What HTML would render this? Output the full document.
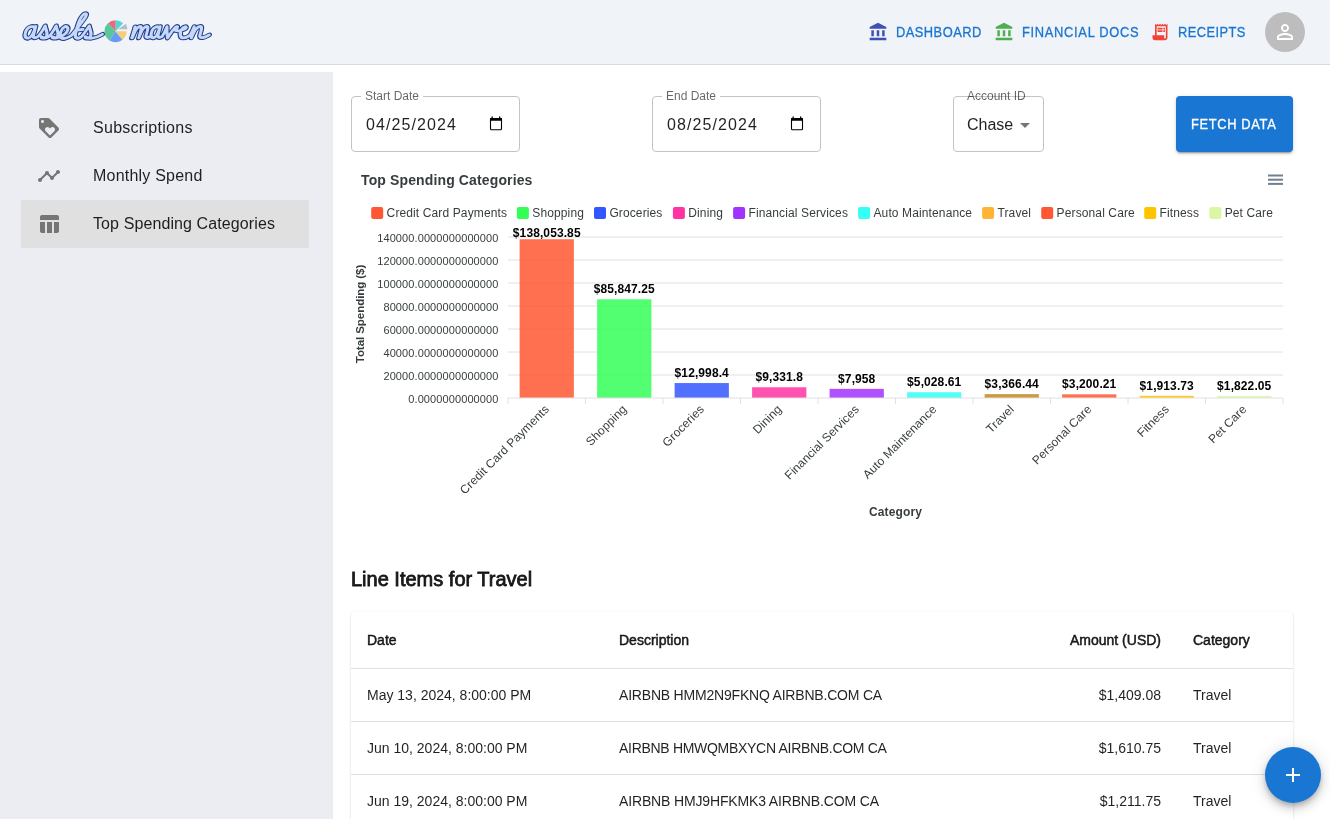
<!DOCTYPE html>
<html><head><meta charset="utf-8">
<style>
*{box-sizing:border-box;margin:0;padding:0}
html,body{width:1330px;height:819px;overflow:hidden;background:#fff;will-change:transform;font-family:"Liberation Sans",sans-serif;color:rgba(0,0,0,0.87)}
.abs{position:absolute}
#hdr{position:absolute;left:0;top:0;width:1330px;height:65px;background:#f0f3f7;border-bottom:1px solid #d9dbe1}
.nav{position:absolute;top:24px;height:16px;line-height:16px;color:#1976d2;font-size:14px;-webkit-text-stroke:0.3px #1976d2;white-space:nowrap;transform-origin:0 0;transform:scaleX(0.92)}
#side{position:absolute;left:0;top:72px;width:333px;height:760px;background:#ecedf2}
.item{position:absolute;left:21px;width:288px;height:48px}
.item.sel{background:#e0e0e0}
.item svg{position:absolute;left:16px;top:12px;width:24px;height:24px;fill:#757575}
.item span{position:absolute;left:72px;top:14px;font-size:16px;line-height:20px;color:rgba(0,0,0,0.87);letter-spacing:0.1px}
.field{position:absolute;top:96px;height:56px;border:1px solid #c4c4c4;border-radius:4px;background:#fff}
.flabel{position:absolute;top:89px;font-size:12px;line-height:14px;color:rgba(0,0,0,0.6);background:#fff;padding:0 4px}
.fval{position:absolute;font-size:16px;line-height:18px;color:rgba(0,0,0,0.87)}
.th{position:absolute;top:16px;font-size:14px;line-height:24px;color:rgba(0,0,0,0.87);-webkit-text-stroke:0.5px rgba(0,0,0,0.87)}
.td{position:absolute;font-size:14px;line-height:20px;color:rgba(0,0,0,0.87)}
.hl{position:absolute;left:0;width:942px;height:1px;background:#e0e0e0}
</style></head><body>
<div id="hdr">
  <!-- logo -->
  <svg class="abs" width="230" height="60" viewBox="0 0 230 60" style="left:0;top:0;overflow:visible"><g transform="translate(0 32.3) scale(1 0.93) translate(0 -32.3)"><g transform="translate(7.57 0) skewX(-11)" fill="none" stroke="#1b3f86" stroke-width="5.3" stroke-linecap="round" stroke-linejoin="round"><path d="M32.8 28.5 C32 26 29.5 25.8 27.8 26.5 C25 27.8 24 31.5 24.2 34.5 C24.4 37.5 26.5 39 28.5 38.5 C31 37.8 32.5 33 33.2 26 L32.8 35.5 C32.8 38.5 35 39 37.5 37 C39.5 34.5 41.5 29 42.5 25.5 C43.5 29 46.5 32 46.2 35.5 C46 38.8 41.5 39.5 40.8 37 C43 38.8 46 38.8 48.5 37 C50.5 34.5 52.5 29 53.5 25.5 C54.5 29 57.5 32 57.2 35.5 C57 38.8 52.5 39.5 51.8 37 C54 38.8 57 38.8 59.5 37 C62 36.5 66 33 66 29.5 C66 26.5 63.5 25.5 62 26.5 C59.5 28 59 33 59.5 35.5 C60 38.5 62.5 39.3 65 38.8 C67.5 38.3 69.5 37 71 35.5 C73.5 31 79 21 81 16 C82.5 12 79.5 11 77.5 14.5 C75.5 18 74.5 28 74.5 34 C74.5 38.5 77.5 39.5 80 38 C82.5 36 84.5 30 86.5 25.5 C87.5 29 90.5 32 90.2 35.5 C90 38.8 85.5 39.5 84.8 37 C88 39.5 95 39.5 101.5 34.5"/><path d="M74.8 29.8 L81 29.3"/><path transform="translate(1.2 0)" d="M130.5 38.3 C131 34 131.3 30 131.5 26.5 L131 38.3 C132 31 133.8 26 136.3 26 C138.5 26 138.2 30 137.5 38.3 C138.5 31 140.3 26 142.8 26 C145 26 144.8 30 144.3 35 C144 37.8 146 38.6 148.5 37.2 M156 28.5 C155.3 26.3 153.3 26 151.8 26.8 C149.5 28 148.8 31.5 149 34.3 C149.2 37.2 151 38.6 152.8 38 C154.8 37.3 156 33 156.5 26.3 L156.1 35 C156 37.8 157.8 38.6 160.3 37.2 C161.8 34 162.8 29.5 163.3 26.3 C163.8 30 164.8 34.5 166.3 38.3 C168 34 170 29.5 172 26.8 C172.8 25.8 174.2 26 173.8 27.8 C173.4 29.2 172.2 29.6 171.6 29.2 C172.6 30.6 174.4 31 176.5 30.6 C179 30 182.5 29.5 182.8 27.8 C183 25.8 179.5 25.6 178.3 29.5 C177.3 33.5 178.5 38.3 182 38.3 C184.5 38.3 186.5 37 188 35.6 C189.3 33 190 29 190.5 26.3 L190 38.3 C191.3 31 193.3 26 196.3 26 C198.8 26 198.5 30 198 35 C197.6 38.5 201 39.5 207.3 35.2"/></g></g><g transform="translate(0 32.3) scale(1 0.93) translate(0 -32.3)"><g transform="translate(7.57 0) skewX(-11)" fill="none" stroke="#c7d6fb" stroke-width="3.1" stroke-linecap="round" stroke-linejoin="round"><path d="M32.8 28.5 C32 26 29.5 25.8 27.8 26.5 C25 27.8 24 31.5 24.2 34.5 C24.4 37.5 26.5 39 28.5 38.5 C31 37.8 32.5 33 33.2 26 L32.8 35.5 C32.8 38.5 35 39 37.5 37 C39.5 34.5 41.5 29 42.5 25.5 C43.5 29 46.5 32 46.2 35.5 C46 38.8 41.5 39.5 40.8 37 C43 38.8 46 38.8 48.5 37 C50.5 34.5 52.5 29 53.5 25.5 C54.5 29 57.5 32 57.2 35.5 C57 38.8 52.5 39.5 51.8 37 C54 38.8 57 38.8 59.5 37 C62 36.5 66 33 66 29.5 C66 26.5 63.5 25.5 62 26.5 C59.5 28 59 33 59.5 35.5 C60 38.5 62.5 39.3 65 38.8 C67.5 38.3 69.5 37 71 35.5 C73.5 31 79 21 81 16 C82.5 12 79.5 11 77.5 14.5 C75.5 18 74.5 28 74.5 34 C74.5 38.5 77.5 39.5 80 38 C82.5 36 84.5 30 86.5 25.5 C87.5 29 90.5 32 90.2 35.5 C90 38.8 85.5 39.5 84.8 37 C88 39.5 95 39.5 101.5 34.5"/><path d="M74.8 29.8 L81 29.3"/><path transform="translate(1.2 0)" d="M130.5 38.3 C131 34 131.3 30 131.5 26.5 L131 38.3 C132 31 133.8 26 136.3 26 C138.5 26 138.2 30 137.5 38.3 C138.5 31 140.3 26 142.8 26 C145 26 144.8 30 144.3 35 C144 37.8 146 38.6 148.5 37.2 M156 28.5 C155.3 26.3 153.3 26 151.8 26.8 C149.5 28 148.8 31.5 149 34.3 C149.2 37.2 151 38.6 152.8 38 C154.8 37.3 156 33 156.5 26.3 L156.1 35 C156 37.8 157.8 38.6 160.3 37.2 C161.8 34 162.8 29.5 163.3 26.3 C163.8 30 164.8 34.5 166.3 38.3 C168 34 170 29.5 172 26.8 C172.8 25.8 174.2 26 173.8 27.8 C173.4 29.2 172.2 29.6 171.6 29.2 C172.6 30.6 174.4 31 176.5 30.6 C179 30 182.5 29.5 182.8 27.8 C183 25.8 179.5 25.6 178.3 29.5 C177.3 33.5 178.5 38.3 182 38.3 C184.5 38.3 186.5 37 188 35.6 C189.3 33 190 29 190.5 26.3 L190 38.3 C191.3 31 193.3 26 196.3 26 C198.8 26 198.5 30 198 35 C197.6 38.5 201 39.5 207.3 35.2"/></g></g><g transform="translate(115.5 31.2)">
        <path d="M0 0 L0 -11 A11 11 0 0 1 7.6 -8 Z" fill="#4fd6d6"/>
        <path d="M0 0 L-7.5 -8 A11 11 0 0 1 0 -11 Z" fill="#e86a7f"/>
        <path d="M0 0 L-6 9.2 A11 11 0 0 1 -7.5 -8 Z" fill="#5ac79a"/>
        <path d="M0 0 L7 8.5 A11 11 0 0 1 -6 9.2 Z" fill="#6a9af8"/>
        <path d="M0 0 L11 0 A11 11 0 0 1 7 8.5 Z" fill="#f1cf7a"/>
        <path d="M2.5 -2 L12 -2 L10.5 -7.5 Z" fill="#b9bccb"/>
      </g></svg>
  <svg class="abs" width="20" height="20" viewBox="0 0 24 24" style="left:868px;top:22px;fill:#3f51b5"><path d="M4 10h3v7H4zm6.5 0h3v7h-3zM2 19h20v3H2zm15-9h3v7h-3zm-5-9L2 6v2h20V6z"/></svg>
  <div class="nav" style="left:896px;letter-spacing:0.5px">DASHBOARD</div>
  <svg class="abs" width="20" height="20" viewBox="0 0 24 24" style="left:994px;top:22px;fill:#4caf50"><path d="M4 10h3v7H4zm6.5 0h3v7h-3zM2 19h20v3H2zm15-9h3v7h-3zm-5-9L2 6v2h20V6z"/></svg>
  <div class="nav" style="left:1022px;letter-spacing:0.75px">FINANCIAL DOCS</div>
  <svg class="abs" width="20" height="20" viewBox="0 0 24 24" style="left:1150px;top:22px;fill:#f44336"><path fill-rule="evenodd" d="M19.5 3.5 18 2l-1.5 1.5L15 2l-1.5 1.5L12 2l-1.5 1.5L9 2 7.5 3.5 6 2v14H3v3c0 1.66 1.34 3 3 3h12c1.66 0 3-1.34 3-3V2zM19 19c0 .55-.45 1-1 1s-1-.45-1-1v-3H8V5h11z"/><path d="M9 7h6v2H9zm7 0h2v2h-2zm-7 3h6v2H9zm7 0h2v2h-2z"/></svg>
  <div class="nav" style="left:1178px;letter-spacing:0.45px">RECEIPTS</div>
  <div class="abs" style="left:1265px;top:12px;width:40px;height:40px;border-radius:50%;background:#bdbdbd">
    <svg width="24" height="24" viewBox="0 0 24 24" style="position:absolute;left:8px;top:8px;fill:#fff"><path d="M12 5.9c1.16 0 2.1.94 2.1 2.1s-.94 2.1-2.1 2.1S9.9 9.16 9.9 8s.94-2.1 2.1-2.1m0 9c2.97 0 6.1 1.46 6.1 2.1v1.1H5.9V17c0-.64 3.13-2.1 6.1-2.1M12 4C9.79 4 8 5.79 8 8s1.79 4 4 4 4-1.79 4-4-1.79-4-4-4m0 9c-2.67 0-8 1.34-8 4v3h16v-3c0-2.66-5.33-4-8-4"/></svg>
  </div>
</div>

<div id="side">
  <div class="item" style="top:32px">
    <svg viewBox="0 0 24 24"><path d="M21.41 11.58l-9-9C12.05 2.22 11.55 2 11 2H4c-1.1 0-2 .9-2 2v7c0 .55.22 1.05.59 1.42l9 9c.36.36.86.58 1.41.58s1.05-.22 1.41-.59l7-7c.37-.36.59-.86.59-1.41s-.23-1.06-.59-1.42M5.5 7C4.67 7 4 6.33 4 5.5S4.67 4 5.5 4 7 4.67 7 5.5 6.33 7 5.5 7m11.77 8.27L13 19.54l-4.27-4.27C8.28 14.81 8 14.19 8 13.5c0-1.38 1.12-2.5 2.5-2.5.69 0 1.32.28 1.77.74l.73.72.73-.73c.45-.45 1.08-.73 1.77-.73 1.38 0 2.5 1.12 2.5 2.5 0 .69-.28 1.32-.73 1.77"/></svg>
    <span style="letter-spacing:0.28px">Subscriptions</span>
  </div>
  <div class="item" style="top:80px">
    <svg viewBox="0 0 24 24"><path d="M23 8c0 1.1-.9 2-2 2-.18 0-.35-.02-.51-.07l-3.56 3.55c.05.16.07.34.07.52 0 1.1-.9 2-2 2s-2-.9-2-2c0-.18.02-.36.07-.52l-2.55-2.55c-.16.05-.34.07-.52.07s-.36-.02-.52-.07l-4.55 4.56c.05.16.07.33.07.51 0 1.1-.9 2-2 2s-2-.9-2-2 .9-2 2-2c.18 0 .35.02.51.07l4.56-4.55C8.02 9.36 8 9.18 8 9c0-1.1.9-2 2-2s2 .9 2 2c0 .18-.02.36-.07.52l2.55 2.55c.16-.05.34-.07.52-.07s.36.02.52.07l3.55-3.56C19.02 8.35 19 8.18 19 8c0-1.1.9-2 2-2s2 .9 2 2"/></svg>
    <span style="letter-spacing:0.22px">Monthly Spend</span>
  </div>
  <div class="item sel" style="top:128px">
    <svg viewBox="0 0 24 24"><path d="M10 10.02h5V21h-5zM17 21h3c1.1 0 2-.9 2-2v-9h-5v11zm3-18H5c-1.1 0-2 .9-2 2v3h19V5c0-1.1-.9-2-2-2zM3 19c0 1.1.9 2 2 2h3V10H3v9z"/></svg>
    <span style="letter-spacing:0.1px">Top Spending Categories</span>
  </div>
</div>

<!-- form -->
<div class="field" style="left:351px;width:169px"></div>
<div class="flabel" style="left:361px">Start Date</div>
<div class="fval" style="left:366px;top:116px;letter-spacing:1.1px">04/25/2024</div><svg class="abs" width="16" height="18" viewBox="0 0 16 18" style="left:488px;top:114px"><rect x="2.5" y="4.5" width="11" height="11.3" rx="1" fill="none" stroke="#000" stroke-width="1.1"/><rect x="2" y="4" width="12" height="2.8" rx="0.5" fill="#000"/><rect x="3.5" y="2.5" width="1.3" height="2" fill="#000"/><rect x="11" y="2.5" width="1.3" height="2" fill="#000"/></svg>
<div class="field" style="left:652px;width:169px"></div>
<div class="flabel" style="left:662px">End Date</div>
<div class="fval" style="left:667px;top:116px;letter-spacing:1.1px">08/25/2024</div><svg class="abs" width="16" height="18" viewBox="0 0 16 18" style="left:789px;top:114px"><rect x="2.5" y="4.5" width="11" height="11.3" rx="1" fill="none" stroke="#000" stroke-width="1.1"/><rect x="2" y="4" width="12" height="2.8" rx="0.5" fill="#000"/><rect x="3.5" y="2.5" width="1.3" height="2" fill="#000"/><rect x="11" y="2.5" width="1.3" height="2" fill="#000"/></svg>

<div class="field" style="left:953px;width:91px"></div>
<div class="flabel" style="left:967px;background:transparent;padding:0">Account ID</div>
<div class="fval" style="left:967px;top:116px">Chase</div><svg class="abs" width="24" height="24" viewBox="0 0 24 24" style="left:1013px;top:113px;fill:rgba(0,0,0,0.54)"><path d="M7 10l5 5 5-5z"/></svg>

<div class="abs" style="left:1176px;top:96px;width:117px;height:56px;background:#1976d2;border-radius:4px;box-shadow:0 3px 1px -2px rgba(0,0,0,.2),0 2px 2px 0 rgba(0,0,0,.14),0 1px 5px 0 rgba(0,0,0,.12);"><div style="position:absolute;left:15px;top:20px;line-height:16px;color:#fff;font-size:14px;-webkit-text-stroke:0.3px #fff;letter-spacing:0.7px;white-space:nowrap;transform-origin:0 0;transform:scaleX(0.92)">FETCH DATA</div></div>

<!-- CHART -->
<div id="chart" class="abs" style="left:0;top:0;width:1330px;height:819px"><svg width="1330" height="819" style="position:absolute;left:0;top:0" font-family="Liberation Sans">
<text x="361" y="185" font-size="14" font-weight="bold" fill="#373d3f" letter-spacing="0.13">Top Spending Categories</text>
<rect x="1268" y="174.5" width="15" height="2" fill="#6e8192"/>
<rect x="1268" y="178.7" width="15" height="2" fill="#6e8192"/>
<rect x="1268" y="182.9" width="15" height="2" fill="#6e8192"/>
<rect x="371.2" y="207" width="12" height="12" rx="2" fill="#FF5733"/>
<text x="386.6" y="217.3" font-size="12" fill="#373d3f" letter-spacing="0.12">Credit Card Payments</text>
<rect x="516.9" y="207" width="12" height="12" rx="2" fill="#33FF57"/>
<text x="532.3" y="217.3" font-size="12" fill="#373d3f" letter-spacing="0.12">Shopping</text>
<rect x="594.0" y="207" width="12" height="12" rx="2" fill="#3357FF"/>
<text x="609.4" y="217.3" font-size="12" fill="#373d3f" letter-spacing="0.12">Groceries</text>
<rect x="672.9" y="207" width="12" height="12" rx="2" fill="#FF33A1"/>
<text x="688.3" y="217.3" font-size="12" fill="#373d3f" letter-spacing="0.12">Dining</text>
<rect x="733.1" y="207" width="12" height="12" rx="2" fill="#A133FF"/>
<text x="748.5" y="217.3" font-size="12" fill="#373d3f" letter-spacing="0.12">Financial Services</text>
<rect x="858.1" y="207" width="12" height="12" rx="2" fill="#33FFF5"/>
<text x="873.5" y="217.3" font-size="12" fill="#373d3f" letter-spacing="0.12">Auto Maintenance</text>
<rect x="982.1" y="207" width="12" height="12" rx="2" fill="#FFB533"/>
<text x="997.5" y="217.3" font-size="12" fill="#373d3f" letter-spacing="0.12">Travel</text>
<rect x="1041.2" y="207" width="12" height="12" rx="2" fill="#FF5733"/>
<text x="1056.6" y="217.3" font-size="12" fill="#373d3f" letter-spacing="0.12">Personal Care</text>
<rect x="1144.2" y="207" width="12" height="12" rx="2" fill="#FFC300"/>
<text x="1159.6" y="217.3" font-size="12" fill="#373d3f" letter-spacing="0.12">Fitness</text>
<rect x="1209.3" y="207" width="12" height="12" rx="2" fill="#DAF7A6"/>
<text x="1224.7" y="217.3" font-size="12" fill="#373d3f" letter-spacing="0.12">Pet Care</text>
<text x="498.5" y="402.50" font-size="11" text-anchor="end" fill="#373d3f" letter-spacing="0.1">0.0000000000000</text>
<line x1="508" y1="375.00" x2="1283" y2="375.00" stroke="#e0e0e0" stroke-width="1"/>
<text x="498.5" y="379.50" font-size="11" text-anchor="end" fill="#373d3f" letter-spacing="0.1">20000.0000000000000</text>
<line x1="508" y1="352.00" x2="1283" y2="352.00" stroke="#e0e0e0" stroke-width="1"/>
<text x="498.5" y="356.50" font-size="11" text-anchor="end" fill="#373d3f" letter-spacing="0.1">40000.0000000000000</text>
<line x1="508" y1="329.00" x2="1283" y2="329.00" stroke="#e0e0e0" stroke-width="1"/>
<text x="498.5" y="333.50" font-size="11" text-anchor="end" fill="#373d3f" letter-spacing="0.1">60000.0000000000000</text>
<line x1="508" y1="306.00" x2="1283" y2="306.00" stroke="#e0e0e0" stroke-width="1"/>
<text x="498.5" y="310.50" font-size="11" text-anchor="end" fill="#373d3f" letter-spacing="0.1">80000.0000000000000</text>
<line x1="508" y1="283.00" x2="1283" y2="283.00" stroke="#e0e0e0" stroke-width="1"/>
<text x="498.5" y="287.50" font-size="11" text-anchor="end" fill="#373d3f" letter-spacing="0.1">100000.0000000000000</text>
<line x1="508" y1="260.00" x2="1283" y2="260.00" stroke="#e0e0e0" stroke-width="1"/>
<text x="498.5" y="264.50" font-size="11" text-anchor="end" fill="#373d3f" letter-spacing="0.1">120000.0000000000000</text>
<line x1="508" y1="237.00" x2="1283" y2="237.00" stroke="#e0e0e0" stroke-width="1"/>
<text x="498.5" y="241.50" font-size="11" text-anchor="end" fill="#373d3f" letter-spacing="0.1">140000.0000000000000</text>
<rect x="519.62" y="239.24" width="54.25" height="158.76" fill="#FF5733" fill-opacity="0.85"/>
<text x="546.75" y="237.00" font-size="12" font-weight="bold" text-anchor="middle" fill="#000" letter-spacing="0.1">$138,053.85</text>
<rect x="597.12" y="299.28" width="54.25" height="98.72" fill="#33FF57" fill-opacity="0.85"/>
<text x="624.25" y="293.28" font-size="12" font-weight="bold" text-anchor="middle" fill="#000" letter-spacing="0.1">$85,847.25</text>
<rect x="674.62" y="383.05" width="54.25" height="14.95" fill="#3357FF" fill-opacity="0.85"/>
<text x="701.75" y="377.05" font-size="12" font-weight="bold" text-anchor="middle" fill="#000" letter-spacing="0.1">$12,998.4</text>
<rect x="752.12" y="387.27" width="54.25" height="10.73" fill="#FF33A1" fill-opacity="0.85"/>
<text x="779.25" y="381.27" font-size="12" font-weight="bold" text-anchor="middle" fill="#000" letter-spacing="0.1">$9,331.8</text>
<rect x="829.62" y="388.85" width="54.25" height="9.15" fill="#A133FF" fill-opacity="0.85"/>
<text x="856.75" y="382.85" font-size="12" font-weight="bold" text-anchor="middle" fill="#000" letter-spacing="0.1">$7,958</text>
<rect x="907.12" y="392.22" width="54.25" height="5.78" fill="#33FFF5" fill-opacity="0.85"/>
<text x="934.25" y="386.22" font-size="12" font-weight="bold" text-anchor="middle" fill="#000" letter-spacing="0.1">$5,028.61</text>
<rect x="984.62" y="394.13" width="54.25" height="3.87" fill="#cc9a42" fill-opacity="1"/>
<text x="1011.75" y="388.13" font-size="12" font-weight="bold" text-anchor="middle" fill="#000" letter-spacing="0.1">$3,366.44</text>
<rect x="1062.12" y="394.32" width="54.25" height="3.68" fill="#FF5733" fill-opacity="0.85"/>
<text x="1089.25" y="388.32" font-size="12" font-weight="bold" text-anchor="middle" fill="#000" letter-spacing="0.1">$3,200.21</text>
<rect x="1139.62" y="395.80" width="54.25" height="2.20" fill="#FFC300" fill-opacity="0.85"/>
<text x="1166.75" y="389.80" font-size="12" font-weight="bold" text-anchor="middle" fill="#000" letter-spacing="0.1">$1,913.73</text>
<rect x="1217.12" y="395.90" width="54.25" height="2.10" fill="#DAF7A6" fill-opacity="0.85"/>
<text x="1244.25" y="389.90" font-size="12" font-weight="bold" text-anchor="middle" fill="#000" letter-spacing="0.1">$1,822.05</text>
<line x1="508" y1="398" x2="1283" y2="398" stroke="#e0e0e0" stroke-width="1"/>
<line x1="508.00" y1="398" x2="508.00" y2="404" stroke="#e0e0e0" stroke-width="1"/>
<line x1="585.50" y1="398" x2="585.50" y2="404" stroke="#e0e0e0" stroke-width="1"/>
<line x1="663.00" y1="398" x2="663.00" y2="404" stroke="#e0e0e0" stroke-width="1"/>
<line x1="740.50" y1="398" x2="740.50" y2="404" stroke="#e0e0e0" stroke-width="1"/>
<line x1="818.00" y1="398" x2="818.00" y2="404" stroke="#e0e0e0" stroke-width="1"/>
<line x1="895.50" y1="398" x2="895.50" y2="404" stroke="#e0e0e0" stroke-width="1"/>
<line x1="973.00" y1="398" x2="973.00" y2="404" stroke="#e0e0e0" stroke-width="1"/>
<line x1="1050.50" y1="398" x2="1050.50" y2="404" stroke="#e0e0e0" stroke-width="1"/>
<line x1="1128.00" y1="398" x2="1128.00" y2="404" stroke="#e0e0e0" stroke-width="1"/>
<line x1="1205.50" y1="398" x2="1205.50" y2="404" stroke="#e0e0e0" stroke-width="1"/>
<line x1="1283.00" y1="398" x2="1283.00" y2="404" stroke="#e0e0e0" stroke-width="1"/>
<text x="549.75" y="410" font-size="12" text-anchor="end" fill="#373d3f" letter-spacing="0.1" transform="rotate(-45 549.75 410)">Credit Card Payments</text>
<text x="627.25" y="410" font-size="12" text-anchor="end" fill="#373d3f" letter-spacing="0.1" transform="rotate(-45 627.25 410)">Shopping</text>
<text x="704.75" y="410" font-size="12" text-anchor="end" fill="#373d3f" letter-spacing="0.1" transform="rotate(-45 704.75 410)">Groceries</text>
<text x="782.25" y="410" font-size="12" text-anchor="end" fill="#373d3f" letter-spacing="0.1" transform="rotate(-45 782.25 410)">Dining</text>
<text x="859.75" y="410" font-size="12" text-anchor="end" fill="#373d3f" letter-spacing="0.1" transform="rotate(-45 859.75 410)">Financial Services</text>
<text x="937.25" y="410" font-size="12" text-anchor="end" fill="#373d3f" letter-spacing="0.1" transform="rotate(-45 937.25 410)">Auto Maintenance</text>
<text x="1014.75" y="410" font-size="12" text-anchor="end" fill="#373d3f" letter-spacing="0.1" transform="rotate(-45 1014.75 410)">Travel</text>
<text x="1092.25" y="410" font-size="12" text-anchor="end" fill="#373d3f" letter-spacing="0.1" transform="rotate(-45 1092.25 410)">Personal Care</text>
<text x="1169.75" y="410" font-size="12" text-anchor="end" fill="#373d3f" letter-spacing="0.1" transform="rotate(-45 1169.75 410)">Fitness</text>
<text x="1247.25" y="410" font-size="12" text-anchor="end" fill="#373d3f" letter-spacing="0.1" transform="rotate(-45 1247.25 410)">Pet Care</text>
<text x="895.5" y="516" font-size="12" font-weight="bold" text-anchor="middle" fill="#373d3f" letter-spacing="0.15">Category</text>
<text x="364" y="314" font-size="11.6" font-weight="bold" text-anchor="middle" fill="#373d3f" letter-spacing="-0.1" transform="rotate(-90 364 314)">Total Spending ($)</text>
</svg></div>

<!-- table -->
<div class="abs" style="left:351px;top:568px;font-size:20px;line-height:22px;color:rgba(0,0,0,0.87);-webkit-text-stroke:0.8px rgba(0,0,0,0.87)">Line Items for Travel</div>
<div class="abs" id="card" style="left:351px;top:612px;width:942px;height:230px;background:#fff;border-radius:4px;box-shadow:0 2px 1px -1px rgba(0,0,0,.2),0 1px 1px 0 rgba(0,0,0,.14),0 1px 3px 0 rgba(0,0,0,.12)">
<div class="th" style="left:16px">Date</div>
<div class="th" style="left:268px">Description</div>
<div class="th" style="right:132px">Amount (USD)</div>
<div class="th" style="left:842px">Category</div>
<div class="hl" style="top:56px"></div>
<div class="td" style="left:16px;top:73px">May 13, 2024, 8:00:00 PM</div><div class="td" style="left:268px;top:73px;letter-spacing:-0.2px">AIRBNB HMM2N9FKNQ AIRBNB.COM CA</div><div class="td" style="right:132px;top:73px">$1,409.08</div><div class="td" style="left:842px;top:73px">Travel</div><div class="hl" style="top:109px"></div>
<div class="td" style="left:16px;top:126px">Jun 10, 2024, 8:00:00 PM</div><div class="td" style="left:268px;top:126px;letter-spacing:-0.3px">AIRBNB HMWQMBXYCN AIRBNB.COM CA</div><div class="td" style="right:132px;top:126px">$1,610.75</div><div class="td" style="left:842px;top:126px">Travel</div><div class="hl" style="top:162px"></div>
<div class="td" style="left:16px;top:179px">Jun 19, 2024, 8:00:00 PM</div><div class="td" style="left:268px;top:179px;letter-spacing:-0.15px">AIRBNB HMJ9HFKMK3 AIRBNB.COM CA</div><div class="td" style="right:132px;top:179px">$1,211.75</div><div class="td" style="left:842px;top:179px">Travel</div><div class="hl" style="top:215px"></div>
</div>

<div class="abs" style="left:1265px;top:747px;width:56px;height:56px;border-radius:50%;background:#1976d2;box-shadow:0 3px 5px -1px rgba(0,0,0,.2),0 6px 10px 0 rgba(0,0,0,.14),0 1px 18px 0 rgba(0,0,0,.12)">
  <svg width="24" height="24" viewBox="0 0 24 24" style="position:absolute;left:16px;top:16px;fill:#fff"><path d="M19 13h-6v6h-2v-6H5v-2h6V5h2v6h6z"/></svg>
</div>
</body></html>
